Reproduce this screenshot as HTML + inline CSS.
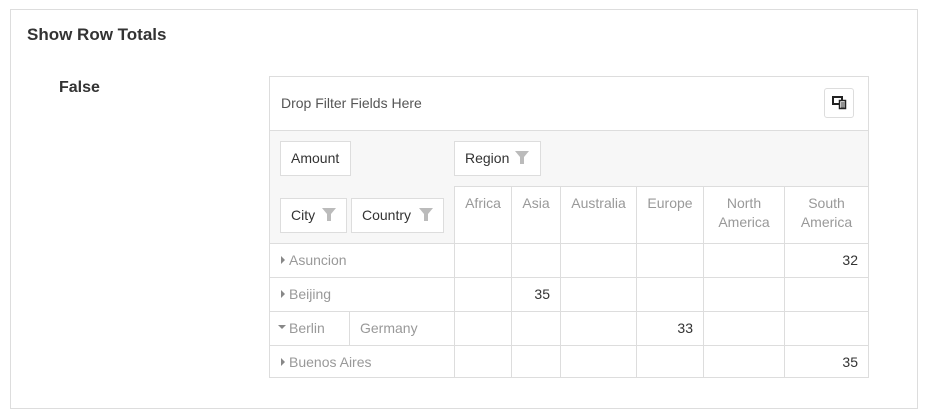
<!DOCTYPE html>
<html><head><style>
*{margin:0;padding:0;box-sizing:border-box}
body{width:925px;height:420px;background:#fff;font-family:"Liberation Sans",Arial,sans-serif;position:relative;overflow:hidden}
.a{position:absolute}
.box{position:absolute;border:1px solid #ddd;background:#fff;font-size:14px;color:#333;line-height:32px;padding-left:10px}
.hl{position:absolute;height:1px;background:#ddd}
.vl{position:absolute;width:1px;background:#ddd}
.t{position:absolute;font-size:14px;color:#999}
.n{position:absolute;font-size:14px;color:#333;text-align:right}
.ch{position:absolute;font-size:14px;color:#999;text-align:center;line-height:19px;top:194px}
.tri{position:absolute;width:0;height:0;border-top:4px solid transparent;border-bottom:4px solid transparent;border-left:4px solid #888}
</style></head><body>
<div class="a" style="left:10px;top:9px;width:908px;height:400px;border:1px solid #ddd"></div>
<div class="a" style="left:27px;top:25px;font-size:17px;font-weight:bold;color:#333">Show Row Totals</div>
<div class="a" style="left:59px;top:79px;font-size:16px;font-weight:bold;color:#333">False</div>

<div class="a" style="left:270px;top:130px;width:598px;height:113px;background:#f7f7f7"></div>
<div class="hl" style="left:270px;top:130px;width:598px"></div>
<div class="a" style="left:281px;top:95px;font-size:14px;color:#555">Drop Filter Fields Here</div>
<div class="a" style="left:824px;top:88px;width:30px;height:30px;border:1px solid #ddd;border-radius:3px;background:#fff"></div>
<svg class="a" style="left:831px;top:94px" width="16" height="16" viewBox="0 0 16 16"><rect x="2" y="3" width="9" height="7" fill="none" stroke="#222" stroke-width="2"/><rect x="8.5" y="6.5" width="6" height="8" fill="#fff" stroke="#222" stroke-width="1.5"/><path d="M10 9h3.5M10 11h3.5M10 13h3.5" stroke="#222" stroke-width="1"/></svg>

<div class="box" style="left:280px;top:141px;width:71px;height:35px">Amount</div>
<div class="box" style="left:454px;top:141px;width:87px;height:35px">Region</div>
<div class="box" style="left:280px;top:198px;width:67px;height:35px">City</div>
<div class="box" style="left:351px;top:198px;width:93px;height:35px">Country</div>
<svg class="a" style="left:514px;top:150px" width="16" height="15" viewBox="0 0 16 15"><path d="M1 1h14l-5 6v7h-4v-7z" fill="#bbb"/></svg>
<svg class="a" style="left:321px;top:207px" width="16" height="15" viewBox="0 0 16 15"><path d="M1 1h14l-5 6v7h-4v-7z" fill="#bbb"/></svg>
<svg class="a" style="left:418px;top:207px" width="16" height="15" viewBox="0 0 16 15"><path d="M1 1h14l-5 6v7h-4v-7z" fill="#bbb"/></svg>

<div class="a" style="left:454px;top:186px;width:414px;height:191px;background:#fff"></div>
<div class="hl" style="left:454px;top:186px;width:414px"></div>
<div class="hl" style="left:270px;top:243px;width:598px"></div>
<div class="hl" style="left:270px;top:277px;width:598px"></div>
<div class="hl" style="left:270px;top:311px;width:598px"></div>
<div class="hl" style="left:270px;top:345px;width:598px"></div>
<div class="vl" style="left:454px;top:186px;height:191px"></div>
<div class="vl" style="left:511px;top:186px;height:191px"></div>
<div class="vl" style="left:560px;top:186px;height:191px"></div>
<div class="vl" style="left:636px;top:186px;height:191px"></div>
<div class="vl" style="left:703px;top:186px;height:191px"></div>
<div class="vl" style="left:784px;top:186px;height:191px"></div>
<div class="vl" style="left:349px;top:311px;height:34px"></div>
<div class="a" style="left:269px;top:76px;width:600px;height:302px;border:1px solid #ddd"></div>

<div class="ch" style="left:455px;width:56px">Africa</div>
<div class="ch" style="left:512px;width:48px">Asia</div>
<div class="ch" style="left:561px;width:75px">Australia</div>
<div class="ch" style="left:637px;width:66px">Europe</div>
<div class="ch" style="left:704px;width:80px">North<br>America</div>
<div class="ch" style="left:785px;width:83px">South<br>America</div>

<div class="tri" style="left:281px;top:256px"></div>
<div class="t" style="left:289px;top:252px">Asuncion</div>
<div class="tri" style="left:281px;top:290px"></div>
<div class="t" style="left:289px;top:286px">Beijing</div>
<div class="a" style="left:278px;top:325px;width:0;height:0;border-left:4px solid transparent;border-right:4px solid transparent;border-top:4px solid #888"></div>
<div class="t" style="left:289px;top:320px">Berlin</div>
<div class="t" style="left:360px;top:320px">Germany</div>
<div class="tri" style="left:281px;top:358px"></div>
<div class="t" style="left:289px;top:354px">Buenos Aires</div>

<div class="n" style="left:785px;width:73px;top:252px">32</div>
<div class="n" style="left:512px;width:38px;top:286px">35</div>
<div class="n" style="left:637px;width:56px;top:320px">33</div>
<div class="n" style="left:785px;width:73px;top:354px">35</div>
</body></html>
